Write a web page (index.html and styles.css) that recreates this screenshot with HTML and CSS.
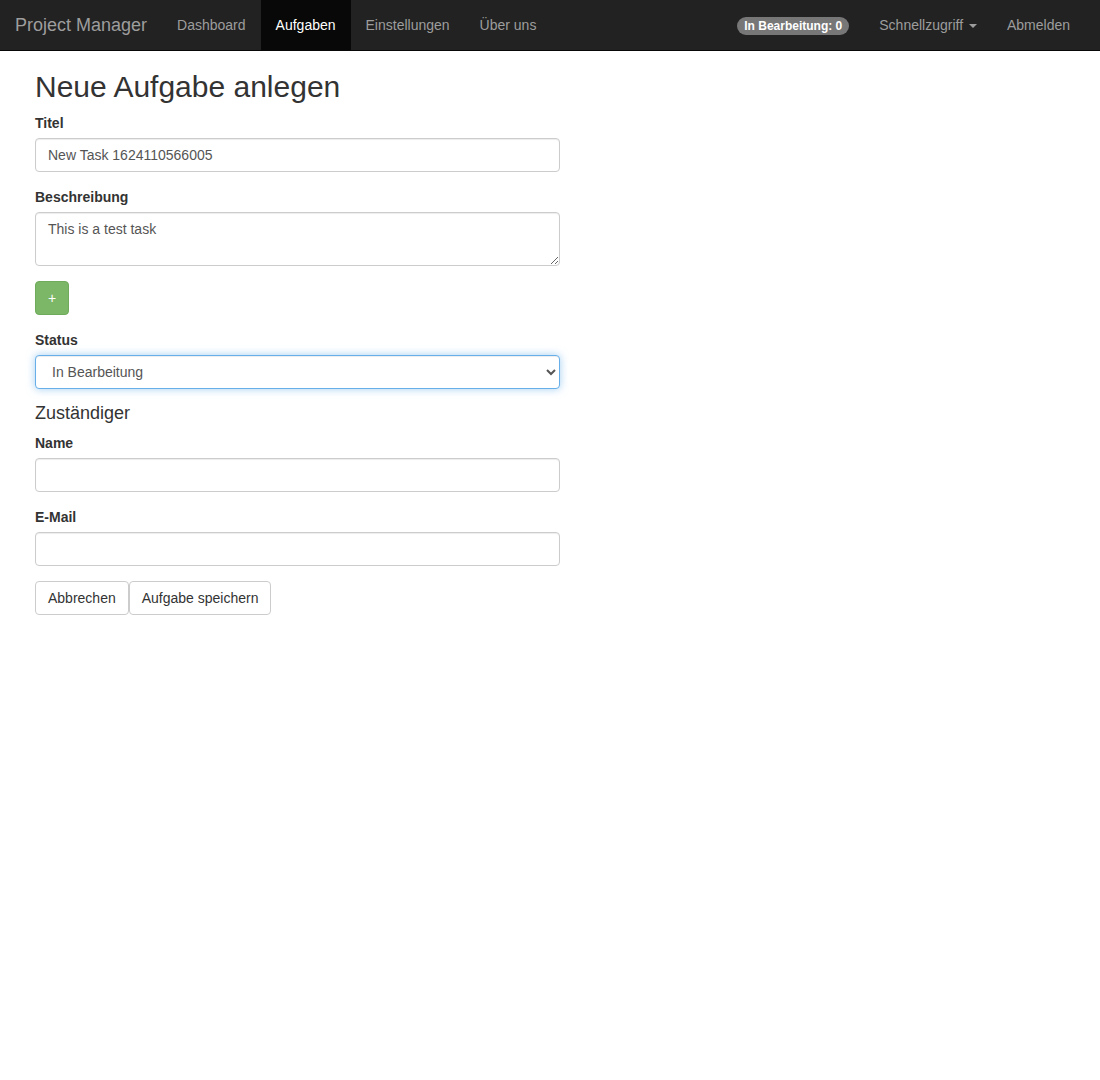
FILE: index.html
```html
<!DOCTYPE html>
<html lang="de">
<head>
<meta charset="utf-8">
<title>Project Manager</title>
<link rel="stylesheet" href="styles.css">
</head>
<body>
<nav class="navbar">
  <div class="nav-left">
    <a class="brand" href="#">Project Manager</a>
    <ul class="nav">
      <li><a href="#">Dashboard</a></li>
      <li class="active"><a href="#">Aufgaben</a></li>
      <li><a href="#">Einstellungen</a></li>
      <li><a href="#">Über uns</a></li>
    </ul>
  </div>
  <ul class="nav nav-right">
    <li class="badge-item"><span class="badge">In Bearbeitung: 0</span></li>
    <li><a href="#">Schnellzugriff <span class="caret"></span></a></li>
    <li><a href="#">Abmelden</a></li>
  </ul>
</nav>
<main class="page">
  <h2 class="title">Neue Aufgabe anlegen</h2>
  <form class="form">
    <div class="form-group">
      <label>Titel</label>
      <input class="form-control" type="text" value="New Task 1624110566005">
    </div>
    <div class="form-group">
      <label>Beschreibung</label>
      <textarea class="form-control textarea" rows="2">This is a test task</textarea>
    </div>
    <div class="form-group">
      <button type="button" class="btn btn-success">+</button>
    </div>
    <div class="form-group">
      <label>Status</label>
      <select class="form-control select focused">
        <option>In Bearbeitung</option>
      </select>
    </div>
    <h4 class="subtitle">Zuständiger</h4>
    <div class="form-group">
      <label>Name</label>
      <input class="form-control" type="text">
    </div>
    <div class="form-group">
      <label>E-Mail</label>
      <input class="form-control" type="email">
    </div>
    <div class="actions">
      <button type="button" class="btn btn-default">Abbrechen</button>
      <button type="button" class="btn btn-default">Aufgabe speichern</button>
    </div>
  </form>
</main>
</body>
</html>
```
FILE: styles.css
```css
* { box-sizing: border-box; }
html, body { margin: 0; padding: 0; }
body {
  font-family: "Liberation Sans", Arial, Helvetica, sans-serif;
  font-size: 14px;
  line-height: 1.42857143;
  color: #333;
  background: #fff;
}
a { text-decoration: none; }

.navbar {
  display: flex;
  justify-content: space-between;
  height: 51px;
  background: #222;
  border-bottom: 1px solid #080808;
  padding: 0 0 0 0;
}
.nav-left { display: flex; }
.brand {
  display: block;
  padding: 15px 15px;
  height: 50px;
  font-size: 18px;
  line-height: 20px;
  color: #9d9d9d;
}
.nav {
  display: flex;
  list-style: none;
  margin: 0;
  padding: 0;
}
.nav li a {
  display: block;
  padding: 15px 15px;
  line-height: 20px;
  color: #9d9d9d;
}
.nav li.active a {
  background: #080808;
  color: #fff;
}
.nav-right { margin-right: 15px; }
.badge-item {
  display: flex;
  align-items: center;
  padding: 0 15px;
}
.badge {
  display: inline-block;
  min-width: 10px;
  padding: 3px 7px;
  font-size: 12px;
  font-weight: bold;
  line-height: 1;
  color: #fff;
  text-align: center;
  white-space: nowrap;
  background: #777;
  border-radius: 10px;
  margin-top: 1px;
}
.caret {
  display: inline-block;
  width: 0;
  height: 0;
  margin-left: 2px;
  vertical-align: middle;
  border-top: 4px solid;
  border-right: 4px solid transparent;
  border-left: 4px solid transparent;
}

.page { padding: 0 35px; }
.title {
  font-size: 30px;
  font-weight: 500;
  line-height: 1.1;
  margin: 19px 0 10px;
}
.form { width: 525px; }
.form-group { margin-bottom: 15px; }
label {
  display: inline-block;
  max-width: 100%;
  margin-bottom: 5px;
  font-weight: bold;
}
.form-control {
  display: block;
  width: 100%;
  height: 34px;
  padding: 6px 12px;
  font-family: inherit;
  font-size: 14px;
  line-height: 1.42857143;
  color: #555;
  background: #fff;
  border: 1px solid #ccc;
  border-radius: 4px;
  box-shadow: inset 0 1px 1px rgba(0,0,0,.075);
  margin: 0;
}
.textarea {
  height: 54px;
  resize: vertical;
}
.focused {
  border-color: #66afe9;
  outline: 0;
  box-shadow: inset 0 1px 1px rgba(0,0,0,.075), 0 0 8px rgba(102,175,233,.6);
}
.subtitle {
  font-size: 18px;
  font-weight: 500;
  line-height: 1.1;
  margin: 10px 0 9px;
}
.btn {
  display: inline-block;
  padding: 6px 12px;
  font-family: inherit;
  font-size: 14px;
  line-height: 1.42857143;
  border: 1px solid transparent;
  border-radius: 4px;
  cursor: pointer;
  margin: 0;
}
.btn-success {
  color: #fff;
  background: #7cb667;
  border-color: #6fab5a;
}
.btn-default {
  color: #333;
  background: #fff;
  border-color: #ccc;
}
.actions {
  display: flex;
  gap: 0;
}
```
